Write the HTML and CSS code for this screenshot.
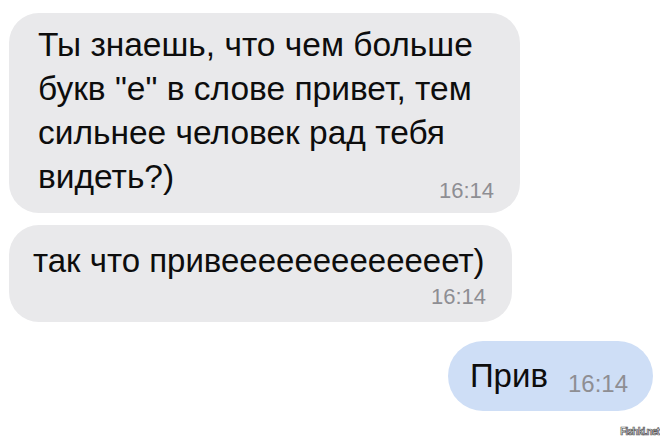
FILE: index.html
```html
<!DOCTYPE html>
<html lang="ru">
<head>
<meta charset="utf-8">
<link rel="stylesheet" href="styles.css">
</head>
<body>
<div class="chat">
  <div class="bubble in first">
    <div class="text">Ты знаешь, что чем больше<br>букв "е" в слове привет, тем<br>сильнее человек рад тебя<br>видеть?)</div>
    <div class="time">16:14</div>
  </div>
  <div class="bubble in second">
    <div class="text big">так что привееееееееееееет)</div>
    <div class="time">16:14</div>
  </div>
  <div class="bubble out">
    <div class="text big">Прив</div>
    <div class="time">16:14</div>
  </div>
  <div class="mark">Fishki.net</div>
</div>
</body>
</html>
```
FILE: styles.css
```css
* { box-sizing: border-box; }
html, body { margin: 0; padding: 0; background: #fff; }
body { width: 660px; height: 444px; overflow: hidden; font-family: "Liberation Sans", Arial, sans-serif; color: #0d0d0d; }
.chat { display: flex; flex-direction: column; padding: 13px 7px 0 9px; }
.bubble { display: flex; background: #e9e9eb; border-radius: 30px; }
.in { flex-direction: column; }
.first { width: 511px; padding: 10.4px 26px 11.3px 29px; }
.first .text { font-size: 33.5px; line-height: 44px; white-space: nowrap; }
.first .time { margin-top: -19.9px; }
.second { width: 503px; margin-top: 12px; padding: 16.6px 26px 13.3px 24px; }
.text.big { font-size: 33px; line-height: 40px; white-space: nowrap; }
.second .time { margin-top: 5.1px; }
.time { align-self: flex-end; font-size: 22px; line-height: 22px; color: #8e8e93; }
.out { align-self: flex-end; flex-direction: row; align-items: flex-end; gap: 20px; margin-top: 19px; padding: 15.6px 25px 14.4px 22px; background: #cedef6; border-radius: 35px; }
.out .time { font-size: 24px; line-height: 24px; }
.mark { align-self: flex-end; margin-top: 16px; margin-right: -6px; font-size: 10px; line-height: 10px; font-weight: bold; color: #fff; -webkit-text-stroke: 0.7px #555; letter-spacing: -0.8px; }
```
